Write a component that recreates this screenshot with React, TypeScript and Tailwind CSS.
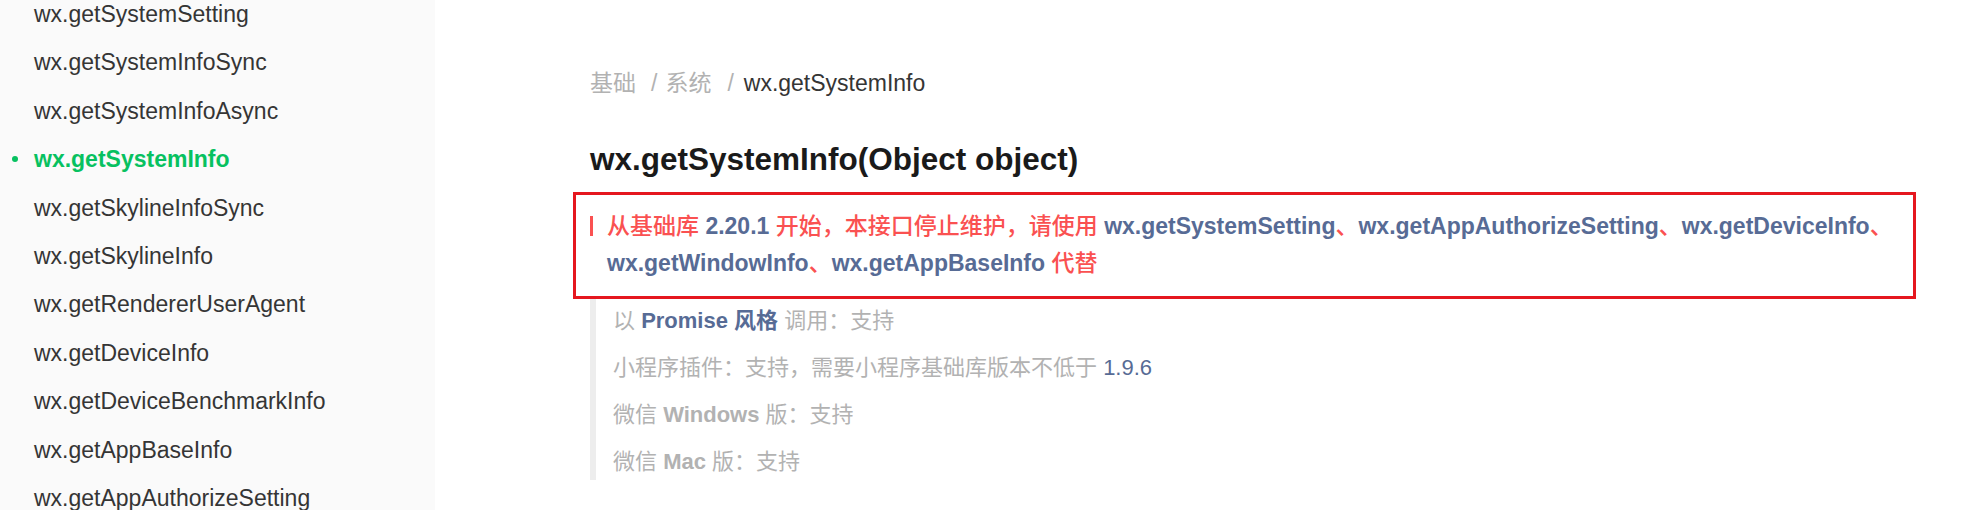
import React from 'react';

const navItems = [
  'wx.getSystemSetting',
  'wx.getSystemInfoSync',
  'wx.getSystemInfoAsync',
  'wx.getSystemInfo',
  'wx.getSkylineInfoSync',
  'wx.getSkylineInfo',
  'wx.getRendererUserAgent',
  'wx.getDeviceInfo',
  'wx.getDeviceBenchmarkInfo',
  'wx.getAppBaseInfo',
  'wx.getAppAuthorizeSetting',
];

const font = "font-['Liberation_Sans','Noto_Sans_CJK_SC',sans-serif]";

function Link({ children }: { children: React.ReactNode }) {
  return <span className="font-bold text-[#576b95]">{children}</span>;
}

function Sep() {
  return <span className="text-[#fa5151]">、</span>;
}

export default function App() {
  const active = 'wx.getSystemInfo';

  return (
    <div className={`flex h-[510px] w-[1968px] overflow-hidden bg-white ${font}`}>
      {/* sidebar */}
      <aside className="w-[435px] shrink-0 bg-[#fafafa]">
        <ul className="mt-[-10px]">
          {navItems.map(item => {
            const isActive = item === active;
            return (
              <li key={item} className="relative pl-[34px] text-[23px] leading-[48.4px]">
                {isActive && (
                  <span className="absolute left-[12px] top-[21px] h-[6px] w-[6px] rounded-full bg-[#07c160]" />
                )}
                <span className={isActive ? 'font-bold text-[#07c160]' : 'text-[#353535]'}>{item}</span>
              </li>
            );
          })}
        </ul>
      </aside>

      {/* main content */}
      <main className="flex-1 pl-[155px] pt-[65px]">
        <div className="flex items-center text-[23px] leading-[36px]">
          <span className="text-[#b2b2b2]">基础</span>
          <span className="ml-[15px] mr-[8px] text-[#b2b2b2]">/</span>
          <span className="text-[#b2b2b2]">系统</span>
          <span className="ml-[16px] mr-[10px] text-[#b2b2b2]">/</span>
          <span className="text-[#353535]">wx.getSystemInfo</span>
        </div>

        <h1 className="mt-[36px] text-[31.5px] font-bold leading-[44px] text-[#1a1a1a]">
          wx.getSystemInfo(Object object)
        </h1>

        <div className="ml-[-17px] mt-[11px] w-[1343px] border-[3px] border-[#e5171f] pb-[14px] pl-[14px] pt-[13px]">
          <p className="relative pl-[17px] text-[23px] font-medium leading-[37px] text-[#fa5151]">
            <span className="absolute left-0 top-[8px] h-[20px] w-[3px] bg-[#fa5151]" />
            从基础库 <Link>2.20.1</Link> 开始，本接口停止维护，请使用 <Link>wx.getSystemSetting</Link>
            <Sep />
            <Link>wx.getAppAuthorizeSetting</Link>
            <Sep />
            <Link>wx.getDeviceInfo</Link>
            <Sep />
            <Link>wx.getWindowInfo</Link>
            <Sep />
            <Link>wx.getAppBaseInfo</Link> 代替
          </p>
        </div>

        <div className="flex w-fit flex-col gap-[11px] border-l-[6px] border-[#ededed] pl-[17px] pt-[4px] text-[22px] leading-[36px] text-[#b2b2b2]">
          <div>
            以 <Link>Promise 风格</Link> 调用：支持
          </div>
          <div>
            小程序插件：支持，需要小程序基础库版本不低于 <span className="text-[#576b95]">1.9.6</span>
          </div>
          <div>
            微信 <span className="font-bold">Windows</span> 版：支持
          </div>
          <div>
            微信 <span className="font-bold">Mac</span> 版：支持
          </div>
        </div>
      </main>
    </div>
  );
}
